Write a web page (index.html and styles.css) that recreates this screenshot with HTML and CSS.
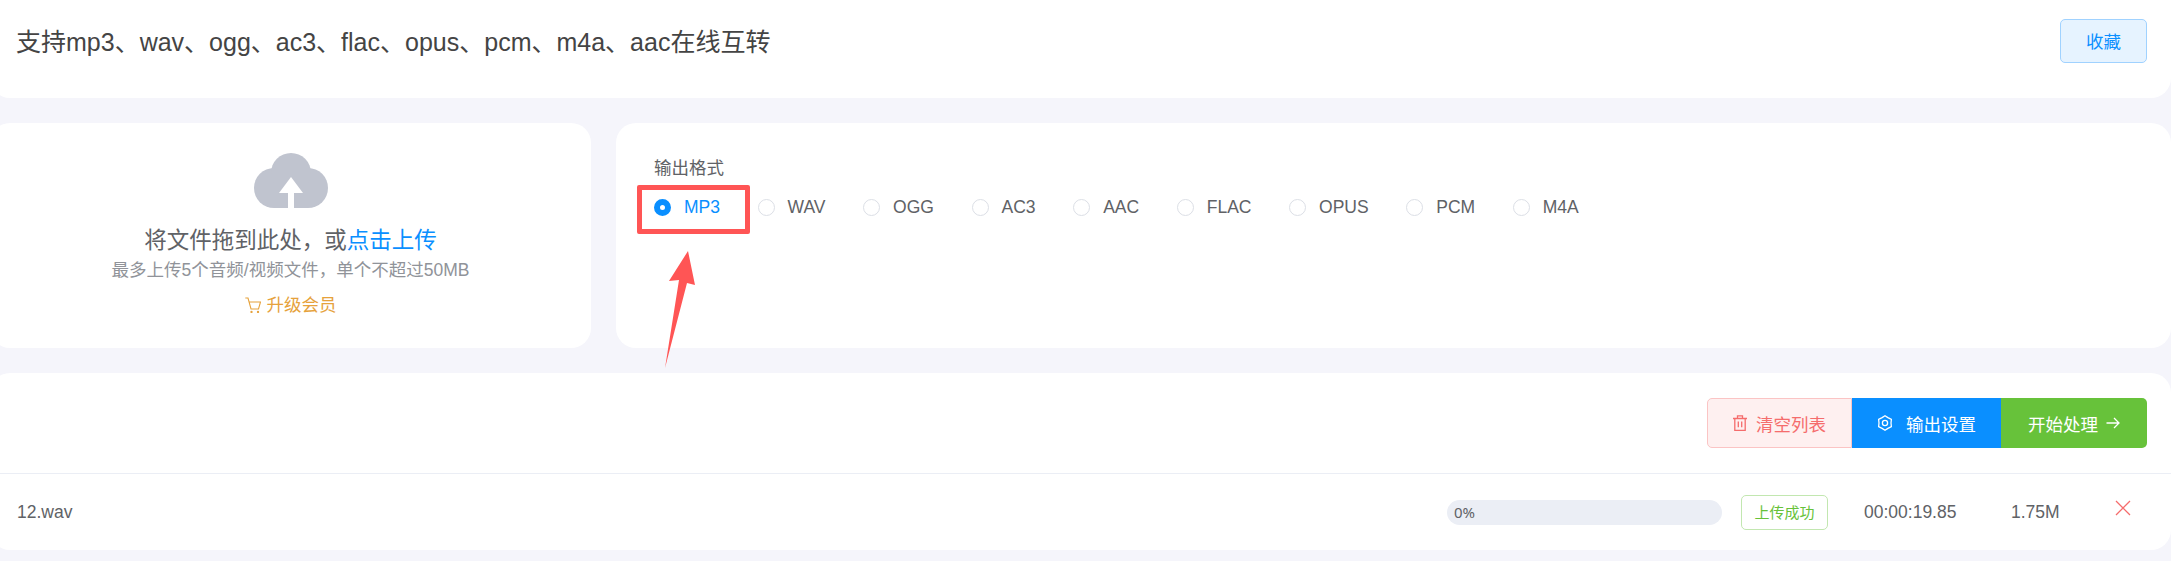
FILE: index.html
```html
<!DOCTYPE html>
<html lang="zh-CN">
<head>
  <meta charset="UTF-8" />
  <title>音频格式转换</title>
  <link rel="stylesheet" href="styles.css">
</head>
<body>
  <div class="page">
    <div class="card head">
      <h1>支持mp3、wav、ogg、ac3、flac、opus、pcm、m4a、aac在线互转</h1>
      <button class="fav">收藏</button>
    </div>

    <div class="middle">
      <div class="card upload">
        <svg class="cloud" width="74" height="55" viewBox="0 0 74 55">
          <circle cx="20" cy="35" r="20" fill="#c0c4cf"/>
          <circle cx="54" cy="35" r="20" fill="#c0c4cf"/>
          <circle cx="37" cy="20" r="20" fill="#c0c4cf"/>
          <rect x="20" y="25" width="34" height="30" fill="#c0c4cf"/>
          <path d="M37 24 L49 40 H40 V55 H34 V40 H25 Z" fill="#fff"/>
        </svg>
        <div class="drop-text">将文件拖到此处，或<span class="blue">点击上传</span></div>
        <div class="drop-tip">最多上传5个音频/视频文件，单个不超过50MB</div>
        <div class="vip">
          <svg width="16" height="16" viewBox="0 0 16 16" fill="none" stroke="#e6a23c" stroke-width="1.1">
            <path d="M0.3 1 H3 L6 12 H13.5 L15.5 5 H4.2"/>
            <circle cx="6.5" cy="15" r="0.6"/>
            <circle cx="13" cy="15" r="0.6"/>
          </svg>
          升级会员
        </div>
      </div>

      <div class="card format">
        <div class="format-title">输出格式</div>
        <div class="radios">
          <label class="radio checked"><i></i>MP3</label>
          <label class="radio"><i></i>WAV</label>
          <label class="radio"><i></i>OGG</label>
          <label class="radio"><i></i>AC3</label>
          <label class="radio"><i></i>AAC</label>
          <label class="radio"><i></i>FLAC</label>
          <label class="radio"><i></i>OPUS</label>
          <label class="radio"><i></i>PCM</label>
          <label class="radio"><i></i>M4A</label>
        </div>
      </div>
    </div>

    <div class="card list">
      <div class="toolbar">
        <button class="btn btn-clear">
          <svg width="14" height="16" viewBox="0 0 14 16" fill="none" stroke="#f56c6c" stroke-width="1.3">
            <path d="M0 3.5 H14 M4.5 3.5 V0.8 H9.5 V3.5 M1.8 3.5 V15.3 H12.2 V3.5 M5.3 6.5 V12.3 M8.7 6.5 V12.3"/>
          </svg>
          清空列表
        </button>
        <button class="btn btn-set">
          <svg width="16" height="16" viewBox="0 0 16 16" fill="none" stroke="#fff" stroke-width="1.3" stroke-linejoin="round">
            <path d="M8 0.7 L10.9 2.6 L14.4 4.3 L14 8 L14.4 11.7 L10.9 13.4 L8 15.3 L5.1 13.4 L1.6 11.7 L2 8 L1.6 4.3 L5.1 2.6 Z"/>
            <circle cx="8" cy="8" r="2.6"/>
          </svg>
          输出设置
        </button>
        <button class="btn btn-start">
          开始处理
          <svg width="14" height="12" viewBox="0 0 14 12" fill="none" stroke="#fff" stroke-width="1.3">
            <path d="M0.5 6 H13 M8 1 L13 6 L8 11"/>
          </svg>
        </button>
      </div>

      <div class="row">
        <div class="name">12.wav</div>
        <div class="progress">0%</div>
        <div class="tag">上传成功</div>
        <div class="time">00:00:19.85</div>
        <div class="size">1.75M</div>
        <svg class="del" width="16" height="16" viewBox="0 0 16 16" fill="none" stroke="#f56c6c" stroke-width="1.3">
          <path d="M1 1 L15 15 M15 1 L1 15"/>
        </svg>
      </div>
    </div>

    <!-- red annotation drawn over the screenshot -->
    <div class="mark"></div>
    <svg class="arrow" width="40" height="125" viewBox="0 0 40 125">
      <path d="M33 1 L40 35 L32 33 L10 118 L24 30 L14 31 Z" fill="#ff5555"/>
    </svg>
  </div>
</body>
</html>
```

FILE: styles.css
```css
* { box-sizing: border-box; }

html, body {
  margin: 0;
  padding: 0;
  height: 561px;
  overflow: hidden;
  background: #f5f5fb;
}

body {
  color: #606266;
  font-family: "Liberation Sans", "Noto Sans CJK SC", sans-serif;
  font-size: 17.5px;
}

.page {
  position: relative;
  width: 2181px;
  margin-left: -10px;
}

.card {
  background: #fff;
  border-radius: 20px;
}

.head {
  height: 98px;
  display: flex;
  justify-content: space-between;
  align-items: flex-start;
  padding: 19px 24px 0 26px;
  border-radius: 0 0 20px 20px;
}

.head h1 {
  margin: 6px 0 0;
  font-size: 25px;
  line-height: 34px;
  font-weight: normal;
  color: #444;
}

.fav {
  width: 87px;
  height: 44px;
  padding: 0 0 2px;
  background: #e6f3ff;
  color: #0a8fff;
  border: 1px solid #a0d2ff;
  border-radius: 5px;
  font: inherit;
}

.middle {
  display: flex;
  gap: 25px;
  margin-top: 25px;
  height: 225px;
}

.upload {
  width: 601px;
  display: flex;
  flex-direction: column;
  align-items: center;
  padding-top: 30px;
}

.cloud { display: block; }

.drop-text {
  margin-top: 19px;
  font-size: 22.5px;
  line-height: 28px;
}

.blue { color: #0a8fff; }

.drop-tip {
  margin-top: 3px;
  font-size: 17.5px;
  line-height: 24px;
  color: #909399;
}

.vip {
  margin-top: 11px;
  display: flex;
  align-items: center;
  gap: 6px;
  font-size: 17.5px;
  line-height: 24px;
  color: #e6a23c;
}

.format {
  flex: 1;
  padding: 33px 38px 0;
}

.format-title {
  line-height: 24px;
}

.radios {
  display: flex;
  gap: 37.6px;
  margin-top: 15px;
  line-height: 24px;
}

.radio {
  display: flex;
  align-items: center;
  gap: 13px;
}

.radio i {
  width: 17px;
  height: 17px;
  border: 1px solid #dcdfe6;
  border-radius: 50%;
  background: #fff;
}

.radio.checked { color: #0a8fff; }

.radio.checked i {
  border: 6px solid #0a8fff;
}

.list {
  margin-top: 25px;
  height: 177px;
}

.toolbar {
  height: 101px;
  display: flex;
  justify-content: flex-end;
  padding: 25px 24px 0 0;
  border-bottom: 1px solid #ebeef5;
}

.btn {
  height: 50px;
  display: flex;
  align-items: center;
  padding: 0;
  border: 1px solid transparent;
  font: inherit;
  color: #fff;
  justify-content: center;
}

.btn-clear {
  width: 145px;
  gap: 9px;
  background: #fef0f0;
  border-color: #fbc4c4;
  color: #f56c6c;
  border-radius: 5px 0 0 5px;
}

.btn-set {
  width: 149px;
  gap: 13px;
  background: #0a8fff;
}

.btn-start {
  width: 146px;
  gap: 8px;
  background: #67c23a;
  border-radius: 0 5px 5px 0;
}

.row {
  display: flex;
  align-items: center;
  height: 76px;
  padding-left: 27px;
}

.name {
  width: 1430px;
}

.progress {
  width: 275px;
  height: 25px;
  padding-left: 7px;
  background: #ebeef5;
  border-radius: 13px;
  font-family: "Noto Sans", sans-serif;
  font-size: 15px;
  line-height: 25px;
}

.tag {
  width: 87px;
  height: 35px;
  margin-left: 19px;
  border: 1px solid #c2e7b0;
  border-radius: 5px;
  background: #fff;
  color: #67c23a;
  font-size: 15px;
  line-height: 33px;
  text-align: center;
}

.time {
  width: 183px;
  padding-left: 36px;
}

.size {
  width: 104px;
}

.del { margin-top: -8px; }

.mark {
  position: absolute;
  left: 647px;
  top: 185px;
  width: 113px;
  height: 49px;
  border: 5px solid #ff5555;
  border-radius: 2px;
}

.arrow {
  position: absolute;
  left: 665px;
  top: 250px;
}
```
